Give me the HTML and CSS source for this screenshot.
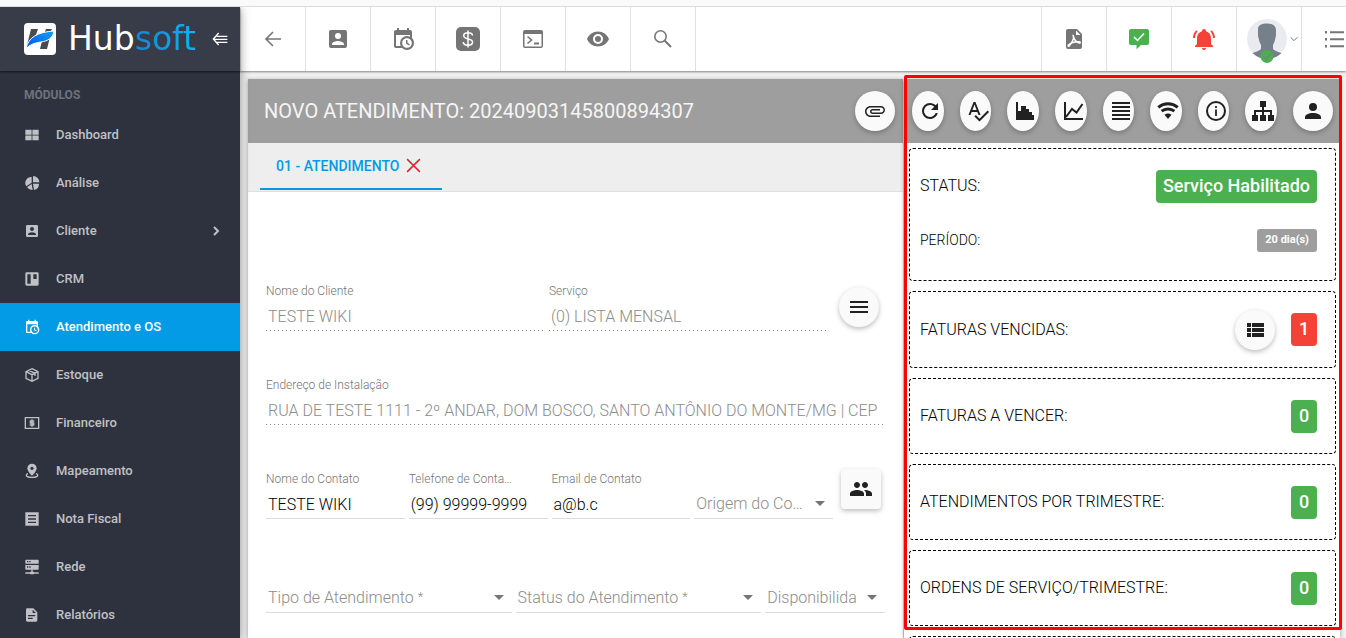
FILE: index.html
```html
<!DOCTYPE html>
<html lang="pt-BR">
<head>
<meta charset="utf-8">
<title>Hubsoft - Novo Atendimento</title>
<link rel="stylesheet" href="styles.css">
</head>
<body>
<svg class="sprite" aria-hidden="true">
  <symbol id="i-dash" viewBox="0 0 24 24"><path d="M2 4h9.400v7.500H2zM12.600 4H22v7.500h-9.400zM2 12.700h9.400V20H2zM12.600 12.700H22V20h-9.400z"/></symbol>
  <symbol id="i-pie" viewBox="0 0 24 24"><path d="M13.500 1.500a9.500 9.500 0 0 1 9.500 9.500h-9.500zM11.500 3v8.500L3.500 17A9 9 0 0 1 11.500 3zM11.500 13.500l1.500 9a9.500 9.500 0 0 1-8.500-4zM13.500 13H22.500a9.500 9.500 0 0 1-7.500 9.500z"/></symbol>
  <symbol id="i-accbox" viewBox="0 0 24 24"><path d="M6,17C6,15 10,13.9 12,13.9C14,13.9 18,15 18,17V18H6M15,9A3,3 0 0,1 12,12A3,3 0 0,1 9,9A3,3 0 0,1 12,6A3,3 0 0,1 15,9M3,5V19A2,2 0 0,0 5,21H19A2,2 0 0,0 21,19V5A2,2 0 0,0 19,3H5C3.89,3 3,3.9 3,5Z"/></symbol>
  <symbol id="i-board" viewBox="0 0 24 24"><path fill-rule="evenodd" d="M2 4a2 2 0 0 1 2-2h16a2 2 0 0 1 2 2v16a2 2 0 0 1-2 2H4a2 2 0 0 1-2-2zM5 5v14h5V5zM14 5v7h5V5z"/></symbol>
  <symbol id="i-cal" viewBox="0 0 24 24"><path d="M15,13H16.5V15.82L18.94,17.23L18.19,18.53L15,16.69V13M19,8H5V19H9.67C9.24,18.09 9,17.07 9,16A7,7 0 0,1 16,9C17.07,9 18.09,9.24 19,9.67V8M5,21C3.89,21 3,20.1 3,19V5C3,3.89 3.89,3 5,3H6V1H8V3H16V1H18V3H19A2,2 0 0,1 21,5V11.1C22.24,12.36 23,14.09 23,16A7,7 0 0,1 16,23C14.09,23 12.36,22.24 11.1,21H5M16,11.15A4.85,4.85 0 0,0 11.15,16C11.15,18.68 13.32,20.85 16,20.85A4.85,4.85 0 0,0 20.85,16C20.85,13.32 18.68,11.15 16,11.15Z"/></symbol>
  <symbol id="i-box" viewBox="0 0 24 24"><path class="ln" d="M12 2.500l9 4.500v10l-9 4.500L3 17V7zM3 7l9 4.500L21 7M12 11.500v10M7.500 5l9 4.500v4"/></symbol>
  <symbol id="i-money" viewBox="0 0 24 24"><path class="ln" d="M2 4h20v16H2z"/><path class="ln" d="M15.500 9h-6v3h5v3h-6M12 6.500v11"/></symbol>
  <symbol id="i-map" viewBox="0 0 24 24"><path fill-rule="evenodd" d="M12 1a7 7 0 0 1 7 7c0 5-7 11-7 11S5 13 5 8a7 7 0 0 1 7-7zm0 4.500a2.500 2.500 0 1 0 0 5 2.500 2.500 0 0 0 0-5z"/><path class="ln" d="M6 16c-3 1-3.500 3-1 4.500s11.500 1.500 14 0 2-3.500-1-4.500"/></symbol>
  <symbol id="i-note" viewBox="0 0 24 24"><path fill-rule="evenodd" d="M2 2h20v20H2zM6 6v2h12V6zM6 11v2h12v-2zM6 16v2h12v-2z"/></symbol>
  <symbol id="i-net" viewBox="0 0 24 24"><path fill-rule="evenodd" d="M3 1h18a1 1 0 0 1 1 1v5H2V2a1 1 0 0 1 1-1zM4.500 3v2h2V3zM8 3v2h2V3zM2 9h20v6a1 1 0 0 1-1 1H3a1 1 0 0 1-1-1zM4.500 11v2h2v-2zM8 11v2h2v-2zM11 16h2v3h2v1h7v2h-7v1H9v-1H2v-2h7v-1h2z"/></symbol>
  <symbol id="i-doc" viewBox="0 0 24 24"><path fill-rule="evenodd" d="M5 2h9l6 6v12a2 2 0 0 1-2 2H5a2 2 0 0 1-2-2V4a2 2 0 0 1 2-2zM13 4v5h5zM6 12v2h11v-2zM6 16v2h7v-2z"/></symbol>
  <symbol id="i-chev" viewBox="0 0 24 24"><path class="ln3" d="M9 6l6 6-6 6"/></symbol>
  <symbol id="i-collapse" viewBox="0 0 24 24"><path class="ln" d="M10 3L2 12l8 9M7 8h16M3 12.500h20M7 17h16"/></symbol>
  <symbol id="i-back" viewBox="0 0 24 24"><path class="ln15" d="M12 5l-7 7 7 7M5 12h15"/></symbol>
  <symbol id="i-dollar" viewBox="0 0 24 24"><rect width="24" height="24" rx="5"/><path class="ln-w" d="M16.500 8.500c0-2-2-2.800-4.500-2.800s-4.300 1-4.300 3c0 4.300 8.900 2.200 8.900 6.400 0 2-2 3.200-4.600 3.200s-4.700-1-4.700-3.200M12 3.500v17"/></symbol>
  <symbol id="i-console" viewBox="0 0 24 24"><path fill-rule="evenodd" d="M4 3h16a2 2 0 0 1 2 2v14a2 2 0 0 1-2 2H4a2 2 0 0 1-2-2V5a2 2 0 0 1 2-2zM3.500 7v12.500h17V7z"/><path class="ln15" d="M6.500 9.500L10.500 13l-4 3.500"/><path class="ln" d="M13 16.500h5"/></symbol>
  <symbol id="i-eye" viewBox="0 0 24 24"><path d="M12,9A3,3 0 0,0 9,12A3,3 0 0,0 12,15A3,3 0 0,0 15,12A3,3 0 0,0 12,9M12,17A5,5 0 0,1 7,12A5,5 0 0,1 12,7A5,5 0 0,1 17,12A5,5 0 0,1 12,17M12,4.500C7,4.500 2.730,7.610 1,12C2.730,16.390 7,19.500 12,19.500C17,19.500 21.270,16.390 23,12C21.270,7.610 17,4.500 12,4.500Z"/></symbol>
  <symbol id="i-search" viewBox="0 0 24 24"><circle class="ln15" cx="9.500" cy="9.500" r="5.700"/><path class="ln" d="M13.800 13.800l6.200 6.200"/></symbol>
  <symbol id="i-pdf" viewBox="0 0 24 24"><path fill-rule="evenodd" d="M6 2h9l5 5v13a2 2 0 0 1-2 2H6a2 2 0 0 1-2-2V4a2 2 0 0 1 2-2zM14 3.500V8h4.500z"/><path class="ln-w" d="M10.500 8.500c1.500 0 .5 5.500 6.500 7.500 1.500.4 1.600-1 .3-1.200-4-.5-8 .8-10.600 3-1.300 1.300-.2 2.200 1 .6C9.500 16 12 11.500 11.500 9.300c-.2-1-1-.8-1-.8z"/></symbol>
  <symbol id="i-chat" viewBox="0 0 24 24"><path d="M4 2h16a2 2 0 0 1 2 2v12a2 2 0 0 1-2 2h-6l-4.500 4.300V18H4a2 2 0 0 1-2-2V4a2 2 0 0 1 2-2z"/><path class="ln-w" stroke-width="2" d="M7 10l3.500 3.500 6.500-7"/></symbol>
  <symbol id="i-bell" viewBox="0 0 24 24"><path d="M21,19V20H3V19L5,17V11C5,7.900 7.030,5.170 10,4.290C10,4.190 10,4.100 10,4A2,2 0 0,1 12,2A2,2 0 0,1 14,4C14,4.100 14,4.190 14,4.290C16.970,5.170 19,7.900 19,11V17L21,19M14,21A2,2 0 0,1 12,23A2,2 0 0,1 10,21M19.750,3.190L18.330,4.610C20.040,6.300 21,8.600 21,11H23C23,8.070 21.840,5.250 19.750,3.190M1,11H3C3,8.600 3.960,6.300 5.670,4.610L4.250,3.190C2.160,5.250 1,8.070 1,11Z"/></symbol>
  <symbol id="i-list" viewBox="0 0 24 24"><path d="M3 4h2v2.500H3zM3 11h2v2.500H3zM3 18h2v2.500H3zM8 4.300h14v1.900H8zM8 11.300h14v1.900H8zM8 18.300h14v1.900H8z"/></symbol>
  <symbol id="i-clip" viewBox="0 0 24 24"><path d="M2 12.500C2 9.460 4.460 7 7.500 7H18c2.210 0 4 1.790 4 4s-1.790 4-4 4H9.500C8.120 15 7 13.880 7 12.500S8.120 10 9.500 10H17v1.500H9.500c-1.300 0-1.300 2 0 2H18c1.400 0 2.500-1.100 2.500-2.500S19.400 8.500 18 8.500H7.500c-2.200 0-4 1.800-4 4s1.800 4 4 4H17V18H7.500C4.460 18 2 15.540 2 12.500z"/></symbol>
  <symbol id="i-refresh" viewBox="0 0 24 24"><path d="M17.650,6.350C16.200,4.900 14.210,4 12,4A8,8 0 0,0 4,12A8,8 0 0,0 12,20C15.730,20 18.840,17.450 19.730,14H17.650C16.830,16.330 14.610,18 12,18A6,6 0 0,1 6,12A6,6 0 0,1 12,6C13.660,6 15.140,6.690 16.220,7.780L13,11H20V4L17.650,6.350Z"/></symbol>
  <symbol id="i-spell" viewBox="0 0 24 24"><path d="M12.450 16h2.090L9.430 3H7.570L2.460 16h2.090l1.120-3h5.640l1.140 3zm-6.020-5L8.500 5.480 10.570 11H6.430zm15.160.59l-8.090 8.090L9.830 16l-1.410 1.410 5.090 5.090L23 13l-1.410-1.410z"/></symbol>
  <symbol id="i-histo" viewBox="0 0 24 24"><path d="M3 3h2v16h16v2H3zM5 12h3V7h5v3h3v3h3v3h2v4H5z"/></symbol>
  <symbol id="i-line" viewBox="0 0 24 24"><path class="ln" d="M4 3v17h18M5 18l6-8 4.500 3.500L21.500 5"/></symbol>
  <symbol id="i-just" viewBox="0 0 24 24"><path d="M3 3h18v2H3zM3 7h18v2H3zM3 11h18v2H3zM3 15h18v2H3zM3 19h18v2H3z"/></symbol>
  <symbol id="i-wifi" viewBox="0 0 24 24"><path class="ln3" d="M2.300 8.300c5.600-4.600 13.800-4.600 19.400 0M5.600 12.200c3.700-3 9.100-3 12.800 0"/><path d="M8.500 15.800c2-1.700 5-1.700 7 0L12 20z"/></symbol>
  <symbol id="i-info" viewBox="0 0 24 24"><circle class="ln" cx="12" cy="12" r="9"/><path d="M11.100 10.500h1.800V17h-1.800zM11.100 7h1.800v1.900h-1.800z"/></symbol>
  <symbol id="i-tree" viewBox="0 0 24 24"><path d="M9 2h6v6H9zM1 16h6v6H1zM9 16h6v6H9zM17 16h6v6h-6z"/><path class="ln" d="M12 8v8M4 16v-4h16v4"/></symbol>
  <symbol id="i-person" viewBox="0 0 24 24"><path d="M12,4A4,4 0 0,1 16,8A4,4 0 0,1 12,12A4,4 0 0,1 8,8A4,4 0 0,1 12,4M12,14C16.420,14 20,15.790 20,18V20H4V18C4,15.790 7.580,14 12,14Z"/></symbol>
  <symbol id="i-group" viewBox="0 0 24 24"><path d="M16 11c1.660 0 2.990-1.340 2.990-3S17.660 5 16 5c-1.660 0-3 1.340-3 3s1.340 3 3 3zm-8 0c1.660 0 2.990-1.340 2.990-3S9.660 5 8 5C6.340 5 5 6.340 5 8s1.340 3 3 3zm0 2c-2.330 0-7 1.170-7 3.500V19h14v-2.500c0-2.330-4.670-3.500-7-3.500zm8 0c-.29 0-.62.02-.97.05 1.160.84 1.970 1.970 1.970 3.450V19h6v-2.500c0-2.330-4.670-3.500-7-3.500z"/></symbol>
  <symbol id="i-menu" viewBox="0 0 24 24"><path d="M3 6h18v2H3zM3 11h18v2H3zM3 16h18v2H3z"/></symbol>
  <symbol id="i-rows" viewBox="0 0 24 24"><path d="M4 5h4v4H4zM9 5h12v4H9zM4 10h4v4H4zM9 10h12v4H9zM4 15h4v4H4zM9 15h12v4H9z"/></symbol>
  <symbol id="i-x" viewBox="0 0 24 24"><path class="ln" d="M3 3l18 18M21 3L3 21"/></symbol>
  <symbol id="i-down" viewBox="0 0 24 24"><path class="ln3" d="M2 7l10 10L22 7"/></symbol>
</svg>

<div class="app">
  <aside class="sidebar">
    <div class="brand">
      <svg class="brand-mark" viewBox="0 0 32 32" aria-hidden="true">
        <defs><linearGradient id="swoosh" x1="0" y1="1" x2="1" y2="0"><stop offset="0" stop-color="#0050f5"/><stop offset="1" stop-color="#12a2f0"/></linearGradient></defs>
        <rect width="32" height="32" rx="4" fill="#fff"/>
        <path d="M7 6h7l-3.500 10L3 22zM22 6h6l-2 4-6 1zM18 18l8-4-3 12h-7z" fill="#494b4d"/>
        <path d="M2 26C4 14 14 9 30 8c-1 7-6 10-13 11C10 20 5 22 2 26z" fill="url(#swoosh)" stroke="#fff"/>
      </svg>
      <span class="brand-name">Hub<span class="brand-soft">soft</span></span>
      <button class="collapse" aria-label="Recolher menu"><svg class="ic16"><use href="#i-collapse"/></svg></button>
    </div>
    <nav class="nav">
      <h2 class="nav-title">MÓDULOS</h2>
      <a class="nav-item" href="#"><svg class="ic16"><use href="#i-dash"/></svg><span>Dashboard</span></a>
      <a class="nav-item" href="#"><svg class="ic16"><use href="#i-pie"/></svg><span>Análise</span></a>
      <a class="nav-item" href="#"><svg class="ic16"><use href="#i-accbox"/></svg><span>Cliente</span><svg class="ic16 nav-arrow"><use href="#i-chev"/></svg></a>
      <a class="nav-item" href="#"><svg class="ic16"><use href="#i-board"/></svg><span>CRM</span></a>
      <a class="nav-item active" href="#"><svg class="ic16"><use href="#i-cal"/></svg><span>Atendimento e OS</span></a>
      <a class="nav-item" href="#"><svg class="ic16"><use href="#i-box"/></svg><span>Estoque</span></a>
      <a class="nav-item" href="#"><svg class="ic16"><use href="#i-money"/></svg><span>Financeiro</span></a>
      <a class="nav-item" href="#"><svg class="ic16"><use href="#i-map"/></svg><span>Mapeamento</span></a>
      <a class="nav-item" href="#"><svg class="ic16"><use href="#i-note"/></svg><span>Nota Fiscal</span></a>
      <a class="nav-item" href="#"><svg class="ic16"><use href="#i-net"/></svg><span>Rede</span></a>
      <a class="nav-item" href="#"><svg class="ic16"><use href="#i-doc"/></svg><span>Relatórios</span></a>
    </nav>
  </aside>

  <div class="main">
    <header class="toolbar">
      <button class="tool" aria-label="Voltar"><svg class="ic24"><use href="#i-back"/></svg></button>
      <button class="tool" aria-label="Clientes"><svg class="ic24"><use href="#i-accbox"/></svg></button>
      <button class="tool" aria-label="Agenda"><svg class="ic24"><use href="#i-cal"/></svg></button>
      <button class="tool" aria-label="Financeiro"><svg class="ic24"><use href="#i-dollar"/></svg></button>
      <button class="tool" aria-label="Console"><svg class="ic24"><use href="#i-console"/></svg></button>
      <button class="tool" aria-label="Visualizar"><svg class="ic24"><use href="#i-eye"/></svg></button>
      <button class="tool" aria-label="Buscar"><svg class="ic24"><use href="#i-search"/></svg></button>
      <div class="tools-right">
        <button class="tool" aria-label="PDF"><svg class="ic24"><use href="#i-pdf"/></svg></button>
        <button class="tool ok" aria-label="Mensagens"><svg class="ic24"><use href="#i-chat"/></svg></button>
        <button class="tool alert" aria-label="Alertas"><svg class="ic24"><use href="#i-bell"/></svg></button>
        <button class="tool user" aria-label="Usuário">
          <svg class="avatar" viewBox="0 0 40 45">
            <defs><clipPath id="face"><circle cx="20" cy="20" r="20"/></clipPath></defs>
            <circle cx="20" cy="20" r="20" fill="#e9ebf0"/>
            <path clip-path="url(#face)" fill="#75808a" d="M11 10c0-4 4-5.500 9-5.500s9 2 9 6.500c0 3 .3 5-.8 9-.5 3-1.500 4-2.200 6v4c3 3 8 3 11 6l-5 4H8l-5-4c3-3 8-3 11-6v-4c-.7-2-1.700-3-2.200-6-1.100-4-.8-6-.8-10z"/>
            <circle cx="20" cy="37.500" r="6.500" fill="#4caf50"/>
            <path d="M16.500 37.500l2.500 2.500 5-5" fill="none" stroke="#75808a" stroke-width="1.200"/>
          </svg>
          <svg class="ic8"><use href="#i-down"/></svg>
        </button>
        <button class="tool last" aria-label="Lista"><svg class="ic24"><use href="#i-list"/></svg></button>
      </div>
    </header>

    <div class="content">
      <main class="ticket">
        <div class="panel-head">
          <h1 class="title">NOVO ATENDIMENTO: 20240903145800894307</h1>
          <button class="fab" aria-label="Anexos"><svg class="ic24"><use href="#i-clip"/></svg></button>
        </div>
        <div class="tabs">
          <button class="tab">01 - ATENDIMENTO<svg class="tab-close"><use href="#i-x"/></svg></button>
        </div>
        <form class="form">
          <div class="row wide">
            <div class="field dis"><label for="cli">Nome do Cliente</label><input id="cli" value="TESTE WIKI" disabled></div>
            <div class="field dis"><label for="srv">Serviço</label><input id="srv" value="(0) LISTA MENSAL" disabled></div>
            <button type="button" class="fab form-fab" aria-label="Opções"><svg class="ic24"><use href="#i-menu"/></svg></button>
          </div>
          <div class="row">
            <div class="field dis"><label for="end">Endereço de Instalação</label><input id="end" value="RUA DE TESTE 1111 - 2º ANDAR, DOM BOSCO, SANTO ANTÔNIO DO MONTE/MG | CEP" disabled></div>
          </div>
          <div class="row">
            <div class="field"><label for="nc">Nome do Contato</label><input id="nc" value="TESTE WIKI"></div>
            <div class="field"><label for="tel">Telefone de Contato</label><input id="tel" value="(99) 99999-9999"></div>
            <div class="field"><label for="em">Email de Contato</label><input id="em" value="a@b.c"></div>
            <div class="field pick"><label for="or">Origem do Contato</label><select id="or"><option></option></select></div>
            <button type="button" class="fab square" aria-label="Contatos"><svg class="ic24"><use href="#i-group"/></svg></button>
          </div>
          <div class="row">
            <div class="field pick double"><label for="ti">Tipo de Atendimento <span class="req">*</span></label><select id="ti"><option></option></select></div>
            <div class="field pick double"><label for="st">Status do Atendimento <span class="req">*</span></label><select id="st"><option></option></select></div>
            <div class="field pick clip"><label for="di">Disponibilidade</label><select id="di"><option></option></select></div>
          </div>
        </form>
      </main>

      <section class="side">
        <div class="panel-head actions">
          <button class="fab" aria-label="Atualizar"><svg class="ic24"><use href="#i-refresh"/></svg></button>
          <button class="fab" aria-label="Verificar"><svg class="ic24"><use href="#i-spell"/></svg></button>
          <button class="fab" aria-label="Histograma"><svg class="ic24"><use href="#i-histo"/></svg></button>
          <button class="fab" aria-label="Gráfico"><svg class="ic24"><use href="#i-line"/></svg></button>
          <button class="fab" aria-label="Registros"><svg class="ic24"><use href="#i-just"/></svg></button>
          <button class="fab" aria-label="Conexão"><svg class="ic24"><use href="#i-wifi"/></svg></button>
          <button class="fab" aria-label="Informações"><svg class="ic24"><use href="#i-info"/></svg></button>
          <button class="fab" aria-label="Rede"><svg class="ic24"><use href="#i-tree"/></svg></button>
          <button class="fab round" aria-label="Cliente"><svg class="ic24"><use href="#i-person"/></svg></button>
        </div>
        <div class="cards">
          <div class="card status">
            <div class="line"><span>STATUS:</span><span class="badge green">Serviço Habilitado</span></div>
            <div class="line small"><span>PERÍODO:</span><span class="badge gray">20 dia(s)</span></div>
          </div>
          <div class="card overdue"><div class="line"><span>FATURAS VENCIDAS:</span><button class="fab" aria-label="Listar faturas"><svg class="ic24"><use href="#i-rows"/></svg></button><span class="badge red">1</span></div></div>
          <div class="card"><div class="line"><span>FATURAS A VENCER:</span><span class="badge green">0</span></div></div>
          <div class="card"><div class="line"><span>ATENDIMENTOS POR TRIMESTRE:</span><span class="badge green">0</span></div></div>
          <div class="card"><div class="line"><span>ORDENS DE SERVIÇO/TRIMESTRE:</span><span class="badge green">0</span></div></div>
          <div class="card"></div>
        </div>
        <div class="highlight"></div>
      </section>
    </div>
  </div>
</div>
</body>
</html>
```
FILE: styles.css
```css
* { box-sizing: border-box; }
body {
  margin: 0;
  height: 100vh;
  padding-top: 6px;
  overflow: hidden;
  background: #fafafa;
  color: #212121;
  font: 16px/24px Roboto, "Liberation Sans", sans-serif;
}
button, input, select { font: inherit; color: inherit; border: 0; background: none; padding: 0; margin: 0; border-radius: 0; }
svg { fill: currentColor; flex: none; display: block; }
h1, h2 { margin: 0; }
.sprite { position: absolute; width: 0; height: 0; }
.ln { fill: none; stroke: currentColor; stroke-width: 2; }
.ln15 { fill: none; stroke: currentColor; stroke-width: 1.6; }
.ln3 { fill: none; stroke: currentColor; stroke-width: 3; }
.ln-w { fill: none; stroke: #fff; stroke-width: 1.5; }
.ic8 { width: 8px; height: 8px; }
.ic16 { width: 16px; height: 16px; }
.ic24 { width: 24px; height: 24px; }

.app { display: flex; height: 100%; overflow: hidden; border-top: 1px solid #dcdcdc; }

.sidebar {
  flex: none;
  width: 240px;
  position: relative;
  z-index: 2;
  background: #2d323e;
  color: #c0c1c5;
  box-shadow: 0 2px 10px rgba(0, 0, 0, .4);
}
.brand {
  height: 64px;
  display: flex;
  align-items: center;
  padding: 0 12px 0 24px;
  background: #383c48;
  box-shadow: 0 1px 2px rgba(0, 0, 0, .6);
}
.brand-mark { width: 32px; height: 32px; }
.brand-name { margin-left: 12px; font: 33px/32px "DejaVu Sans", sans-serif; color: #fff; }
.brand-soft { color: transparent; background: linear-gradient(90deg, #1583d6, #0db4ef); -webkit-background-clip: text; background-clip: text; }
.collapse { margin-left: auto; color: #fff; }
.nav-title { padding: 16px 24px 0; height: 40px; font-size: 12px; line-height: 16px; font-weight: 700; color: #6f727b; }
.nav-item {
  display: flex;
  align-items: center;
  gap: 16px;
  height: 48px;
  padding: 0 16px 0 24px;
  color: inherit;
  font-size: 13px;
  line-height: 16px;
  font-weight: 500;
  text-decoration: none;
}
.nav-item.active { background: #039be5; color: #fff; }
.nav-arrow { margin-left: auto; }

.main { flex: 1; min-width: 0; display: flex; flex-direction: column; }
.toolbar {
  flex: none;
  display: flex;
  height: 64px;
  position: relative;
  z-index: 1;
  background: #fff;
  color: #757575;
  box-shadow: 0 1px 2px rgba(0, 0, 0, .45);
}
.tool { flex: none; width: 65px; display: flex; align-items: center; justify-content: center; border-right: 1px solid #e0e0e0; }
.tool:first-child { width: 66px; }
.tools-right { margin-left: auto; display: flex; }
.tools-right .tool, .tools-right .tool:first-child { width: 65px; border-right: 0; border-left: 1px solid #e0e0e0; }
.tools-right .last { width: 45px; justify-content: flex-end; }
.ok { color: #4caf50; }
.alert { color: #f44336; }
.tools-right .user { gap: 3px; padding-left: 6px; }
.avatar { width: 40px; height: 45px; margin-top: 4px; }

.content { flex: 1; min-height: 0; display: flex; gap: 1px; padding: 8px 6px 0 8px; background: #f0f0f0; }
.ticket { flex: 655; min-width: 0; overflow: hidden; background: #fff; box-shadow: 0 1px 4px rgba(0, 0, 0, .35); }
.side { flex: 436; min-width: 0; position: relative; background: #fff; box-shadow: 0 1px 4px rgba(0, 0, 0, .35); }
.panel-head { display: flex; align-items: center; height: 64px; padding: 0 8px 0 16px; background: #9e9e9e; }
.title { flex: 1; font-size: 20px; line-height: 24px; font-weight: 400; color: #f5f5f5; }
.fab {
  flex: none;
  width: 40px;
  height: 40px;
  display: flex;
  align-items: center;
  justify-content: center;
  border-radius: 50%;
  background: #fafafa;
  color: #212121;
  box-shadow: 0 2px 5px rgba(0, 0, 0, .26);
}
.actions { gap: 16px; padding: 0 7px 0 8px; }
.actions .fab { flex: 1; min-width: 0; justify-content: flex-start; padding-left: 6px; }
.actions .round { flex: none; padding-left: 8px; }

.tabs { height: 49px; padding: 0 12px; display: flex; background: #eee; border-bottom: 1px solid #e0e0e0; }
.tab {
  display: flex;
  align-items: center;
  gap: 6px;
  height: 47px;
  padding: 0 20px 0 16px;
  border-bottom: 2px solid #039be5;
  color: #039be5;
  font-size: 14px;
  font-weight: 500;
}
.tab-close { width: 17px; height: 17px; color: #d9232e; }

.form { display: flex; flex-direction: column; gap: 46px; padding: 91px 18px 0; }
.row { display: flex; gap: 4px; height: 48px; }
.wide { gap: 6px; }
.field { flex: 1; min-width: 0; position: relative; display: flex; flex-direction: column; }
.double { flex: 2 1 6px; }
.field label { font-size: 12px; line-height: 16px; color: #757575; font-weight: 300; white-space: nowrap; overflow: hidden; text-overflow: ellipsis; padding-right: 33px; }
.field input, .field select { width: 100%; height: 32px; padding: 4px 2px 0; border-bottom: 1px solid #dcdcdc; color: #000; font-weight: 300; }
.dis input { color: #8c8c8c; height: 31px; border-bottom: 0; }
.dis::after { content: ""; height: 1px; background: repeating-linear-gradient(90deg, #8c8c8c 0 1px, transparent 1px 4px); }
.pick { padding-top: 16px; }
.pick select { appearance: none; }
.pick label { position: absolute; inset: 21px 28px auto 2px; padding: 0; font-size: 16px; line-height: 24px; color: #8c8c8c; pointer-events: none; }
.pick::after { content: ""; position: absolute; right: 8px; bottom: 13px; border: 5px solid transparent; border-top-color: #757575; border-bottom: 0; }
.clip label { text-overflow: clip; }
.req { font-size: 13px; vertical-align: 2px; line-height: 16px; }
.form-fab { margin: 4px 6px 0 7px; }
.square { margin: -2px 4px 0; border-radius: 4px; }

.cards { display: flex; flex-direction: column; gap: 10px; padding: 5px 4px 0 5px; }
.card { border: 1px dashed #000; border-radius: 4px; min-height: 76px; padding: 0 18px 0 10px; color: #000; }
.line { display: flex; align-items: center; gap: 16px; min-height: 74px; font-weight: 300; }
.overdue .line { min-height: 75px; }
.line > :first-child { flex: 1; }
.status { padding-bottom: 23px; }
.status .small { min-height: 34px; font-size: 14px; }
.badge { min-width: 26px; padding: 4px 7px 5px; border-radius: 4px; color: #fff; font-size: 18px; line-height: 24px; font-weight: 500; text-align: center; }
.small .badge { padding: 3px 8px 4px; font-size: 11px; line-height: 16px; font-weight: 700; border-radius: 3px; }
.green { background: #4caf50; }
.red { background: #f44336; }
.gray { background: #9e9e9e; }

/* Outline drawn over the whole side panel */
.highlight { position: absolute; inset: -4px -2px 8px 0; border: 3px solid #f00; border-radius: 2px; pointer-events: none; }
```
